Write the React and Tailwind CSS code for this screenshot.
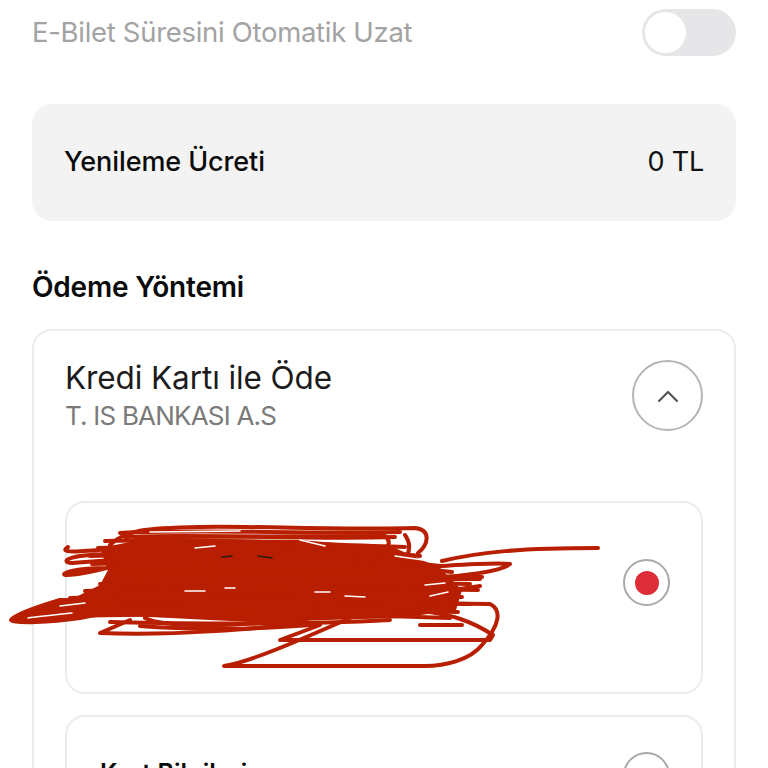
import React from 'react';

// horizontal-ish scrawl strokes that make up the dense part of the scribble
const strokes = [
  'M98 548 C200 544 330 546 420 556',
  'M90 556 C220 552 340 554 440 566',
  'M92 564 C220 560 360 562 452 572',
  'M112 577 L482 577',
  'M100 584 C220 580 360 582 470 584',
  'M85 591 C220 587 360 588 478 590',
  'M70 598 C200 594 360 596 462 597',
  'M60 604 C200 600 360 602 470 604',
  'M58 610 C200 607 360 608 458 612',
  'M62 616 C200 613 340 614 450 618',
  'M110 622 C200 624 300 625 390 620',
  'M140 626 C190 630 260 630 320 624',
  'M420 625 L462 625',
  'M120 533 C200 529 300 534 400 532',
  'M125 537 C200 533 300 540 395 537',
  'M105 541 C220 538 320 545 405 547',
];

function Scribble() {
  return (
    <svg className="absolute left-0 top-0 pointer-events-none" width="768" height="768" viewBox="0 0 768 768" fill="none" stroke="#b81e00" strokeWidth="4" strokeLinecap="round" strokeLinejoin="round">
      <path fill="#b81e00" stroke="none" d="M100 548 L150 538 L300 540 L395 548 L440 568 L462 590 L456 610 L400 618 L250 622 L130 616 L62 612 L70 600 L100 585 L108 570 Z" />
      {strokes.map((d) => <path key={d} d={d} />)}
      {/* top loops */}
      <path d="M110 545 C125 530 145 528 200 527 C260 526 350 530 415 528 C432 530 428 545 418 553 M135 537 L385 536 C395 545 385 552 360 556 M405 535 C412 545 410 555 400 565" />
      <path d="M68 547 C60 552 68 553 110 549 M110 554 C65 555 60 562 72 563 L112 560 M110 568 C65 568 58 576 68 575 C80 574 100 570 115 566" />
      {/* long tail to the right */}
      <path d="M442 561 C480 552 520 548 598 548" />
      <path d="M405 568 C450 566 490 562 510 564 C500 572 460 576 440 577 M450 579 L480 579 M440 592 L480 586" />
      {/* left tip */}
      <path fill="#b81e00" d="M60 600 C40 606 15 615 11 620 C15 624 50 622 80 618 L110 612 L110 600 Z" />
      <path stroke="#ffffff" strokeWidth="1.5" d="M28 618 C45 616 60 614 72 613 M60 606 L85 603" />
      {/* lower loops */}
      <path d="M130 620 L100 633 C180 636 260 628 300 624 M145 618 C165 628 230 626 270 622 C295 622 320 618 325 612" />
      <path d="M400 603 L490 604 C502 610 500 625 482 645 C470 660 445 666 425 666 L224 666 C250 662 300 640 350 618" />
      <path d="M320 625 L280 640 L490 640 L493 635 C470 620 450 615 430 612" />
      {/* little gaps where the white shows through */}
      <path stroke="#ffffff" strokeWidth="1.5" d="M185 591 L205 591 M225 588 L235 588 M315 592 L330 592 M345 596 L365 597 M425 585 L445 583 M430 596 L448 592 M195 548 L215 546 M150 532 L240 531 M300 540 L325 546 M395 556 L430 561" />
      <path stroke="#2a1a14" strokeWidth="1.5" d="M222 557 L232 556 M258 556 L272 558" />
    </svg>
  );
}

function Radio({ checked }) {
  return (
    <div className="w-[47px] h-[47px] shrink-0 rounded-full border-2 border-[#a9a9a9] flex items-center justify-center">
      {checked && <div className="w-6 h-6 rounded-full bg-[#dc2d38]" />}
    </div>
  );
}

export default function App() {
  return (
    <div className="relative w-[768px] h-[768px] overflow-hidden bg-white font-['Inter','Liberation_Sans',sans-serif]">
      <div className="px-8 pt-[9px]">
        <div className="flex items-center justify-between h-[47px]">
          <span className="text-[27.5px] text-[#a3a3a3] tracking-[-0.3px]">E-Bilet Süresini Otomatik Uzat</span>
          <div className="w-[94px] h-[47px] rounded-full bg-[#e6e6e8] flex items-center pl-[3px]">
            <div className="w-[41px] h-[41px] rounded-full bg-white" />
          </div>
        </div>

        <div className="mt-12 h-[117px] rounded-[20px] bg-[#f3f3f3] flex items-center justify-between px-8">
          <span className="text-[27px] font-medium text-[#0b0b0b] tracking-[-0.1px]">Yenileme Ücreti</span>
          <span className="text-[27px] text-[#111111] tracking-[-0.2px]">0 TL</span>
        </div>

        <h2 className="mt-[49px] h-[34px] leading-[34px] text-[28px] font-semibold text-[#0b0b0b] tracking-[-0.2px]">Ödeme Yöntemi</h2>

        <div className="mt-[25px] h-[600px] rounded-[20px] border-2 border-[#ececec] px-[31px] pt-[29px]">
          <div className="flex items-start justify-between">
            <div>
              <div className="text-[31.5px] leading-[36px] text-[#1c1c1c] tracking-[-0.1px]">Kredi Kartı ile Öde</div>
              <div className="mt-[3px] text-[26px] leading-[34px] text-[#7a7a7a] tracking-[-0.8px]">T. IS BANKASI A.S</div>
            </div>
            <button className="w-[71px] h-[71px] rounded-full border-2 border-[#b5b5b5] flex items-center justify-center">
              <svg width="22" height="14" viewBox="0 0 22 14" fill="none" stroke="#555555" strokeWidth="2.2" strokeLinecap="round" strokeLinejoin="round">
                <path d="M2 12 L11 3 L20 12" />
              </svg>
            </button>
          </div>

          <div className="mt-[68px] h-[193px] rounded-[20px] border-2 border-[#ececec] flex items-center justify-end pr-[31px] pb-[30px]">
            <Radio checked />
          </div>

          <div className="mt-[21px] h-[193px] rounded-[20px] border-2 border-[#ececec] flex items-start justify-between pl-[33px] pr-[31px] pt-[35px]">
            <span className="text-[25px] font-semibold text-[#0b0b0b] mt-[3px]">Kart Bilgileri</span>
            <Radio />
          </div>
        </div>
      </div>
      <Scribble />
    </div>
  );
}
